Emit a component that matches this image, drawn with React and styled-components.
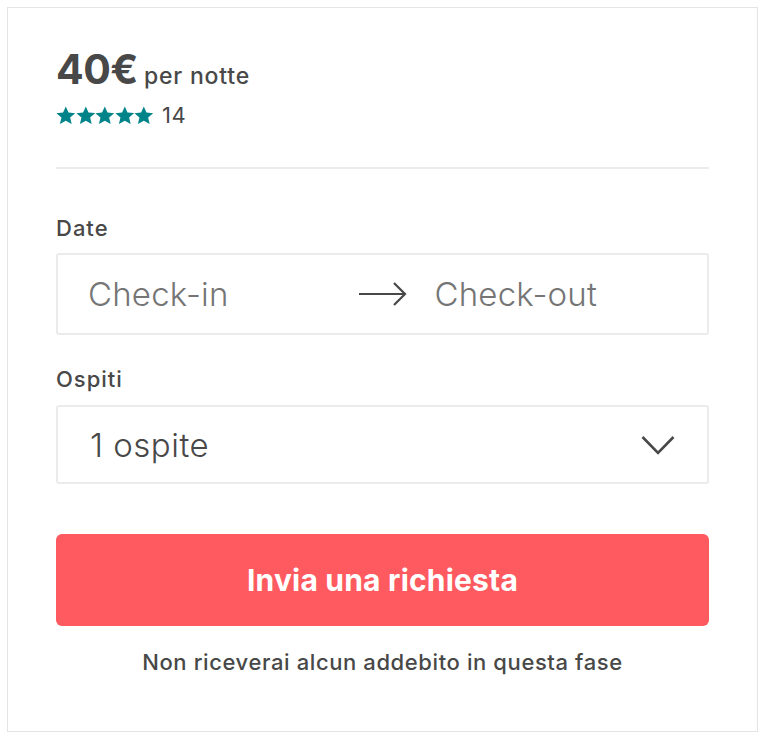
import React from 'react';
import styled, { createGlobalStyle } from 'styled-components';

const GlobalStyle = createGlobalStyle`
  body {
    margin: 0;
    font-family: Inter, "Noto Sans", sans-serif;
    color: #484848;
    background: #fff;
  }
`;

const Page = styled.div`
  padding: 7px;
  width: 766px;
  box-sizing: border-box;
`;

const Card = styled.section`
  border: 1px solid #e4e4e4;
  width: 751px;
  height: 725px;
  box-sizing: border-box;
  padding: 36px 48px 0 48px;
`;

const PriceRow = styled.div`
  display: flex;
  align-items: baseline;
  gap: 6px;
  height: 50px;
`;

const Price = styled.span`
  font-size: 41px;
  font-weight: 700;
  letter-spacing: -0.5px;
`;

const PerNight = styled.span`
  font-size: 23px;
  font-weight: 500;
  letter-spacing: 0.8px;
`;

const Rating = styled.div`
  display: flex;
  align-items: center;
  gap: 8px;
  margin-top: 8px;
  font-size: 22px;
  letter-spacing: 0.5px;
`;

const Stars = styled.div`
  display: flex;
  color: #008489;
`;

const Divider = styled.hr`
  border: none;
  border-top: 2px solid #ebebeb;
  margin: 39px 0 0;
`;

const Label = styled.div`
  font-size: 22px;
  font-weight: 500;
  letter-spacing: 1px;
  line-height: 26px;
  margin-top: ${(p) => p.$top}px;
  margin-bottom: ${(p) => p.$bottom}px;
`;

const Box = styled.div`
  border: 2px solid #ebebeb;
  border-radius: 3px;
  height: ${(p) => p.$height}px;
  box-sizing: border-box;
  display: flex;
  align-items: center;
`;

const DateGrid = styled(Box)`
  display: grid;
  grid-template-columns: 1fr auto 1fr;
  column-gap: 28px;
  padding: 0 30px;
`;

const Placeholder = styled.span`
  font-size: 33px;
  font-weight: 300;
  letter-spacing: 0.2px;
  color: #757575;
`;

const Select = styled(Box)`
  justify-content: space-between;
  padding: 0 32px;
  font-size: 33px;
  font-weight: 300;
  letter-spacing: 0.5px;
`;

const Button = styled.button`
  display: block;
  width: 100%;
  height: 92px;
  margin-top: 50px;
  border: none;
  border-radius: 6px;
  background: #ff5a5f;
  color: #fff;
  font-family: inherit;
  font-size: 30px;
  font-weight: 700;
  letter-spacing: 0.2px;
`;

const Note = styled.p`
  margin: 23px 0 0;
  text-align: center;
  font-size: 22px;
  font-weight: 500;
  letter-spacing: 0.6px;
`;

const Star = () => (
  <svg width="19.6" height="19" viewBox="0 0 24 23" fill="currentColor">
    <path d="M12 0.5l3.3 7.3 8.2.8-6.2 5.4 1.9 8L12 17.8l-7.2 4.2 1.9-8L.5 8.6l8.2-.8z" />
  </svg>
);

const Arrow = () => (
  <svg width="48" height="26" viewBox="0 0 48 26" fill="none" stroke="#484848" strokeWidth="2.2">
    <path d="M0 13h46M35 2l11 11-11 11" />
  </svg>
);

const Chevron = () => (
  <svg width="34" height="20" viewBox="0 0 34 20" fill="none" stroke="#484848" strokeWidth="2.6">
    <path d="M1.5 2l15.5 16L32.5 2" />
  </svg>
);

export default function App() {
  return (
    <Page>
      <GlobalStyle />
      <Card>
        <PriceRow>
          <Price>40€</Price>
          <PerNight>per notte</PerNight>
        </PriceRow>
        <Rating>
          <Stars>
            {[0, 1, 2, 3, 4].map((i) => (
              <Star key={i} />
            ))}
          </Stars>
          <span>14</span>
        </Rating>
        <Divider />
        <Label $top={46} $bottom={12}>Date</Label>
        <DateGrid $height={82}>
          <Placeholder>Check-in</Placeholder>
          <Arrow />
          <Placeholder>Check-out</Placeholder>
        </DateGrid>
        <Label $top={31} $bottom={13}>Ospiti</Label>
        <Select $height={79}>
          <span>1 ospite</span>
          <Chevron />
        </Select>
        <Button>Invia una richiesta</Button>
        <Note>Non riceverai alcun addebito in questa fase</Note>
      </Card>
    </Page>
  );
}
